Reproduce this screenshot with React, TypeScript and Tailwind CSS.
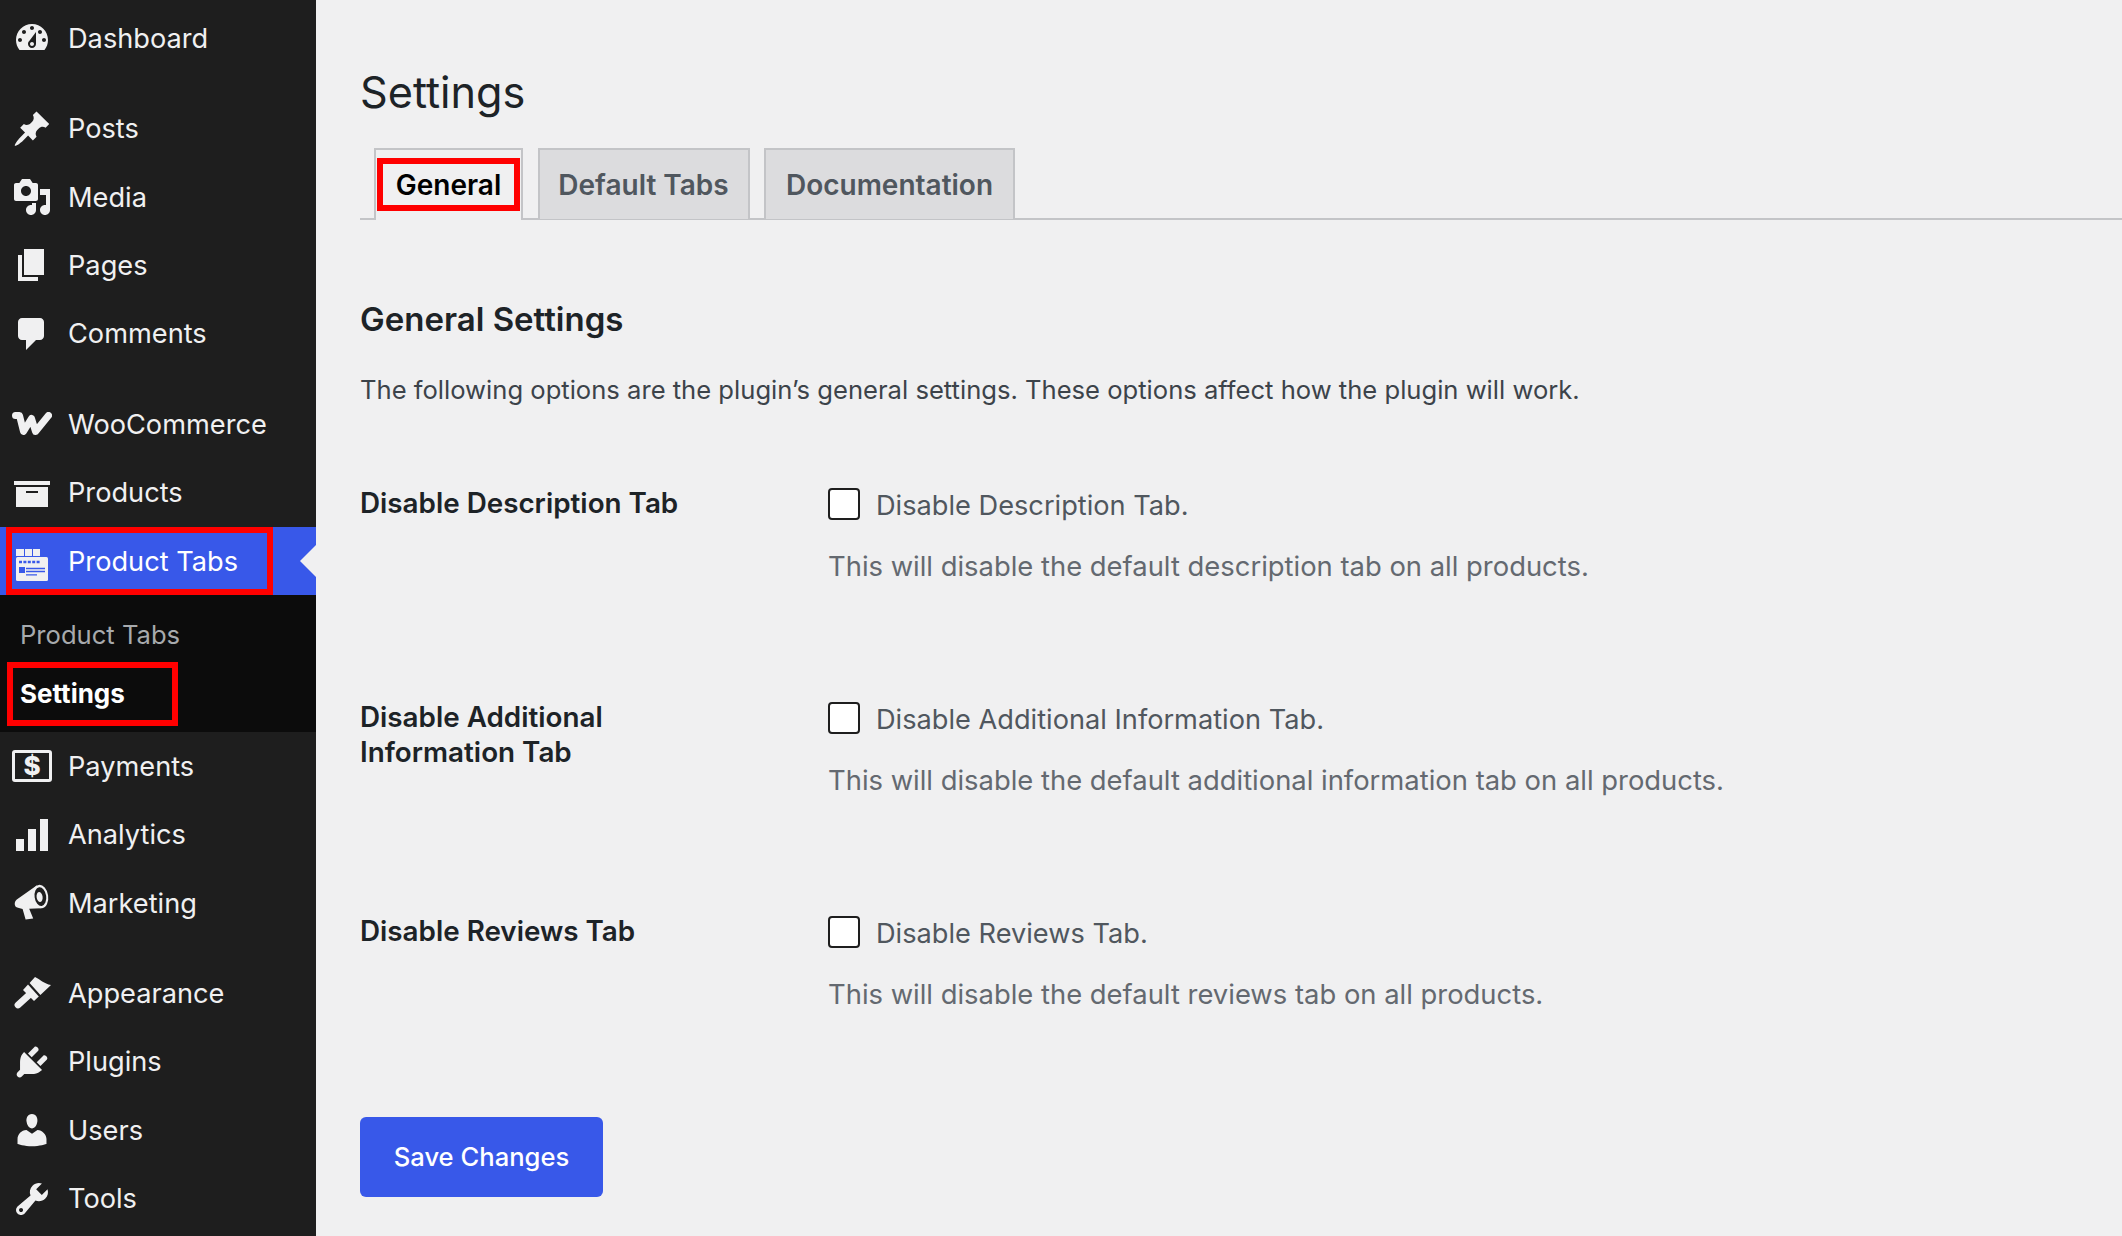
import { ReactNode } from 'react';

const ICON_PATHS: Record<string, string> = {
  dashboard: 'M3.76 16h12.48c1.1-1.37 1.76-3.11 1.76-5 0-4.42-3.58-8-8-8s-8 3.58-8 8c0 1.89.66 3.63 1.76 5zM10 4c.55 0 1 .45 1 1s-.45 1-1 1-1-.45-1-1 .45-1 1-1zM6 6c.55 0 1 .45 1 1s-.45 1-1 1-1-.45-1-1 .45-1 1-1zm8 0c.55 0 1 .45 1 1s-.45 1-1 1-1-.45-1-1 .45-1 1-1zm-5.37 5.55L12 7v6c0 1.1-.9 2-2 2s-2-.9-2-2c0-.57.24-1.08.63-1.45zM4 10c.55 0 1 .45 1 1s-.45 1-1 1-1-.45-1-1 .45-1 1-1zm12 0c.55 0 1 .45 1 1s-.45 1-1 1-1-.45-1-1 .45-1 1-1zm-5 3c0-.55-.45-1-1-1s-1 .45-1 1 .45 1 1 1 1-.45 1-1z',
  posts: 'M10.44 3.02l1.82-1.82 6.36 6.35-1.83 1.82c-1.05-.68-2.48-.57-3.41.36l-.75.75c-.92.93-1.04 2.35-.35 3.41l-1.83 1.82-2.41-2.41-2.8 2.79c-.42.42-3.38 2.71-3.8 2.29s1.86-3.39 2.28-3.81l2.79-2.79L4.1 9.36l1.83-1.82c1.05.69 2.48.57 3.4-.36l.75-.75c.93-.92 1.05-2.35.36-3.41z',
  media: 'M13 11V4c0-.55-.45-1-1-1h-1.67L9 1H5L3.67 3H2c-.55 0-1 .45-1 1v7c0 .55.45 1 1 1h10c.55 0 1-.45 1-1zM7 4.5c1.38 0 2.5 1.12 2.5 2.5S8.38 9.5 7 9.5 4.5 8.38 4.5 7 5.62 4.5 7 4.5zM14 6h5v10.5c0 1.38-1.12 2.5-2.5 2.5S14 17.88 14 16.5s1.12-2.5 2.5-2.5c.17 0 .34.02.5.05V9h-3V6zm-4 8.05V13h2v3.5c0 1.38-1.12 2.5-2.5 2.5S7 17.88 7 16.5 8.12 14 9.5 14c.17 0 .34.02.5.05z',
  pages: 'M6 15V2h10v13H6zm-1 1h8v2H3V5h2v11z',
  comments: 'M5 2h9c1.1 0 2 .9 2 2v7c0 1.1-.9 2-2 2h-2l-5 5v-5H5c-1.1 0-2-.9-2-2V4c0-1.1.9-2 2-2z',
  products: 'M19 4v2H1V4h18zM2 7h16v10H2V7zm11 3V9H7v1h6z',
  analytics: 'M18 18V2h-4v16h4zm-6 0V7H8v11h4zm-6 0v-6H2v6h4z',
  plugins: 'M13.11 4.36L9.87 7.6 8 5.73l3.24-3.24c.35-.34 1.05-.2 1.56.32.52.51.66 1.21.31 1.55zm-8 1.77l.91-1.12 9.01 9.01-1.19.84c-.71.71-2.63 1.16-3.82 1.16H6.14L4.9 17.26c-.59.59-1.54.59-2.12 0-.59-.58-.59-1.53 0-2.12l1.24-1.24v-3.88c0-1.13.4-3.19 1.09-3.89zm7.26 3.97l3.24-3.24c.34-.35 1.04-.21 1.55.31.52.51.66 1.21.31 1.55l-3.24 3.25z',
  users: 'M10 9.25c-2.27 0-2.73-3.44-2.73-3.44C7 4.02 7.82 2 9.97 2c2.16 0 2.98 2.02 2.71 3.81 0 0-.41 3.44-2.68 3.44zm0 2.57L12.72 10c2.39 0 4.52 2.33 4.52 4.53v2.49s-3.65 1.13-7.24 1.13c-3.65 0-7.24-1.13-7.24-1.13v-2.49c0-2.25 1.94-4.48 4.47-4.48z',
  tools: 'M16.68 9.77c-1.34 1.34-3.3 1.67-4.95.99l-5.41 6.52c-.99.99-2.59.99-3.58 0s-.99-2.59 0-3.57l6.52-5.42c-.68-1.65-.35-3.61.99-4.95 1.28-1.28 3.12-1.62 4.72-1.06l-2.89 2.89 2.82 2.82 2.86-2.87c.53 1.58.18 3.39-1.08 4.65zM3.81 16.21c.4.39 1.04.39 1.43 0 .4-.4.4-1.04 0-1.43-.39-.4-1.03-.4-1.43 0-.39.39-.39 1.03 0 1.43z',
};

function Dashicon({ name }: { name: string }) {
  return (
    <svg viewBox="0 0 20 20" className="w-10 h-10 shrink-0 fill-[#f0f0f1]">
      <path fillRule="evenodd" d={ICON_PATHS[name]} />
    </svg>
  );
}

function MarketingIcon() {
  return (
    <svg viewBox="0 0 20 20" className="w-10 h-10 shrink-0">
      <path d="M12.500 1.100 2.400 8.200C1 9.300 1 11.600 2.600 12.300L5.300 13l1.500 5.300 3.800-.5-2-4.900L14.500 12.600z" fill="#f0f0f1" />
      <ellipse cx="14.200" cy="6.800" rx="3.900" ry="5.900" transform="rotate(-8 14.200 6.800)" fill="#f0f0f1" />
      <ellipse cx="14.200" cy="6.800" rx="2.900" ry="4.700" transform="rotate(-8 14.200 6.800)" fill="#1e1e1e" />
      <ellipse cx="13.800" cy="7" rx="1.500" ry="2.500" transform="rotate(-8 13.800 7)" fill="#f0f0f1" />
    </svg>
  );
}

function AppearanceIcon() {
  return (
    <svg viewBox="0 0 20 20" className="w-10 h-10 shrink-0">
      <path d="M11.500 2C14 3 16 5.500 19.500 6L14.200 11 8.800 5z" fill="#f0f0f1" />
      <path d="M8 5.800 13.400 11.800 11 14 5.500 8.500z" fill="#f0f0f1" />
      <path d="M8.500 11 3 16" stroke="#f0f0f1" strokeWidth="3.400" strokeLinecap="round" />
    </svg>
  );
}

function WooIcon() {
  return (
    <svg viewBox="0 0 40 24" className="w-10 h-6 shrink-0">
      <path d="M3.500 3.500H7.500L11.500 19.500 19.500 6.500 23.500 19.500 36.500 3.500" fill="none" stroke="#f0f0f1" strokeWidth="7" strokeLinejoin="round" strokeLinecap="round" />
    </svg>
  );
}

function TabsIcon() {
  return (
    <svg viewBox="0 0 40 40" className="w-10 h-10 shrink-0">
      <path d="M4 8h8v7H4zM13 8h7v7h-7zM21 8h7v7h-7z" fill="#f0f0f1" />
      <rect x="4" y="16" width="32" height="24" rx="1.500" fill="#f0f0f1" />
      <path d="M7 21h3M11.400 21h3M15.800 21h3M20.200 21h3M24.600 21h3" stroke="#3858e9" strokeWidth="2.400" />
      <rect x="7" y="26" width="6" height="6" fill="#3858e9" />
      <path d="M14 27.500h19M14 30.500h19M14 33.800h11" stroke="#3858e9" strokeWidth="1.300" />
    </svg>
  );
}

function PaymentsIcon() {
  return (
    <span className="w-10 h-8 shrink-0 border-[3px] border-[#f0f0f1] rounded-[3px] flex items-center justify-center text-[#f0f0f1] text-[26px] font-extrabold leading-none">
      $
    </span>
  );
}

function MenuItem({ icon, label, active, children }: { icon: ReactNode; label: string; active?: boolean; children?: ReactNode }) {
  return (
    <div className={`relative flex items-center h-[68.4px] pl-3 gap-4 text-[27.2px] ${active ? 'bg-[#3858e9] text-white' : 'text-[#f0f0f1]'}`}>
      <span className="w-10 h-10 flex items-center justify-center shrink-0">{icon}</span>
      <span className="mt-[2px]">{label}</span>
      {children}
    </div>
  );
}

const OPTIONS = [
  { title: ['Disable Description Tab'], label: 'Disable Description Tab.', help: 'This will disable the default description tab on all products.' },
  { title: ['Disable Additional', 'Information Tab'], label: 'Disable Additional Information Tab.', help: 'This will disable the default additional information tab on all products.' },
  { title: ['Disable Reviews Tab'], label: 'Disable Reviews Tab.', help: 'This will disable the default reviews tab on all products.' },
];

export default function App() {
  return (
    <div className="flex h-[1236px] w-[2122px] overflow-hidden bg-[#f0f0f1] font-[Inter,sans-serif]">
      <aside className="w-[316px] shrink-0 bg-[#1e1e1e] pt-1">
        <MenuItem icon={<Dashicon name="dashboard" />} label="Dashboard" />
        <div className="mt-[22px]">
          <MenuItem icon={<Dashicon name="posts" />} label="Posts" />
          <MenuItem icon={<Dashicon name="media" />} label="Media" />
          <MenuItem icon={<Dashicon name="pages" />} label="Pages" />
          <MenuItem icon={<Dashicon name="comments" />} label="Comments" />
        </div>
        <div className="mt-[22px]">
          <MenuItem icon={<WooIcon />} label="WooCommerce" />
          <MenuItem icon={<Dashicon name="products" />} label="Products" />
          <MenuItem icon={<TabsIcon />} label="Product Tabs" active>
            <span className="absolute left-[6px] top-0 w-[267px] h-[68px] border-[6px] border-[#ff0000]" />
            <span className="absolute right-0 top-1/2 -translate-y-1/2 border-y-[16px] border-y-transparent border-r-[16px] border-r-[#f0f0f1]" />
          </MenuItem>
          <div className="bg-[#0c0c0c] h-[137px] pt-[11px] pl-5 text-[25.6px]">
            <div className="h-[58px] flex items-center text-[#a7aaad]">Product Tabs</div>
            <div className="relative h-[58px] flex items-center font-bold text-[26px] text-white">
              Settings
              <span className="absolute left-[-13px] top-[-2px] w-[171px] h-[64px] border-[6px] border-[#ff0000]" />
            </div>
          </div>
          <MenuItem icon={<PaymentsIcon />} label="Payments" />
          <MenuItem icon={<Dashicon name="analytics" />} label="Analytics" />
          <MenuItem icon={<MarketingIcon />} label="Marketing" />
        </div>
        <div className="mt-[22px]">
          <MenuItem icon={<AppearanceIcon />} label="Appearance" />
          <MenuItem icon={<Dashicon name="plugins" />} label="Plugins" />
          <MenuItem icon={<Dashicon name="users" />} label="Users" />
          <MenuItem icon={<Dashicon name="tools" />} label="Tools" />
        </div>
      </aside>

      <main className="flex-1 pl-[44px] pt-[62px] text-[#1d2327]">
        <h1 className="text-[43.2px] leading-[60px] font-normal">Settings</h1>

        <div className="mt-[26px] flex h-[72px] pl-[14px] gap-[14.5px] border-b-2 border-[#c3c4c7] text-[28px] font-semibold">
          <div className="relative h-[72px] w-[149px] border-2 border-b-0 border-[#c3c4c7] bg-[#f0f0f1] flex items-center justify-center text-black">
            General
            <span className="absolute left-[1px] top-[8px] w-[143px] h-[53px] border-[6px] border-[#ff0000]" />
          </div>
          <div className="h-[71px] w-[212px] border-2 border-b-0 border-[#c3c4c7] bg-[#dcdcde] flex items-center justify-center text-[#50575e]">Default Tabs</div>
          <div className="h-[71px] w-[251px] border-2 border-b-0 border-[#c3c4c7] bg-[#dcdcde] flex items-center justify-center text-[#50575e]">Documentation</div>
        </div>

        <h2 className="mt-[77px] text-[33px] leading-[44px] font-semibold">General Settings</h2>
        <p className="mt-[29px] text-[25.6px] leading-[40px] text-[#3c434a]">The following options are the plugin’s general settings. These options affect how the plugin will work.</p>

        <div className="mt-[73px] flex flex-col gap-[94px]">
          {OPTIONS.map(opt => (
            <div key={opt.label} className="flex h-[120px]">
              <div className="w-[468px] shrink-0 text-[27.8px] leading-[35px] font-semibold mt-[3px]">
                {opt.title.map(t => <div key={t}>{t}</div>)}
              </div>
              <div>
                <div className="flex items-center gap-4">
                  <span className="w-8 h-8 border-2 border-[#1e1e1e] rounded-[4px] bg-white" />
                  <span className="text-[27.2px] leading-[36px] text-[#50575e] mt-[5px]">{opt.label}</span>
                </div>
                <p className="mt-[24px] text-[27.4px] leading-[36px] text-[#646970]">{opt.help}</p>
              </div>
            </div>
          ))}
        </div>

        <button className="mt-[86px] w-[243px] h-[80px] rounded-[6px] bg-[#3858e9] text-white text-[25.6px] font-medium">Save Changes</button>
      </main>
    </div>
  );
}
